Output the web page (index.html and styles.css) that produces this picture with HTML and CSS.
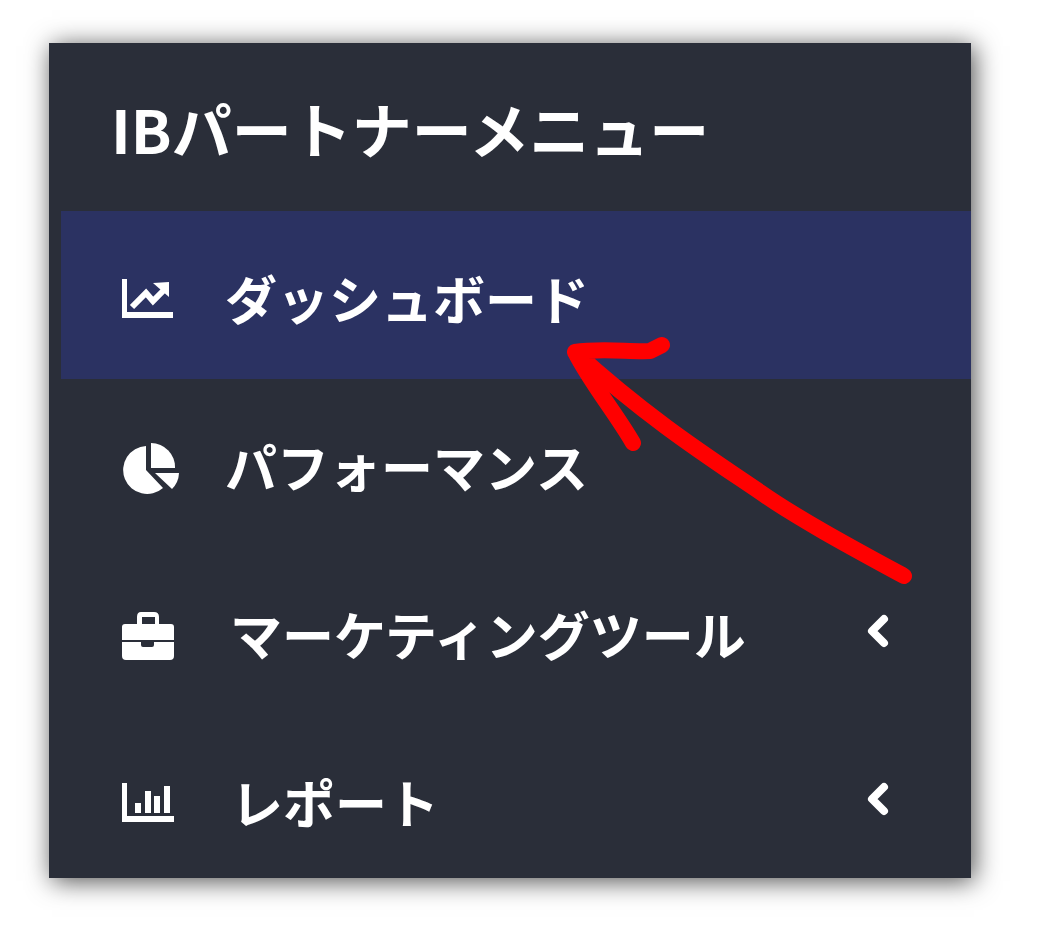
FILE: index.html
```html
<!DOCTYPE html>
<html lang="ja">
<head>
<meta charset="utf-8">
<title>IBパートナーメニュー</title>
<link rel="stylesheet" href="styles.css">
</head>
<body>
<div class="stage">
  <nav class="panel">
    <h1 class="title">IBパートナーメニュー</h1>
    <ul class="menu">
      <li class="item active">
        <svg class="icon" viewBox="0 0 60 52"><g transform="translate(0 4)"><path d="M1 0h5v33h46v6H1z"/><path class="line" d="M11 28l14-14 7 8 14-14"/><path d="M32 4l16-1v15z"/></g></svg>
        <span class="label">ダッシュボード</span>
      </li>
      <li class="item">
        <svg class="icon" viewBox="0 0 60 52"><path d="M25 3v24l17 18A24 24 0 1 1 25 3z"/><path d="M30 0a24 24 0 0 1 24 25H30z"/><path d="M34 30h24a24 24 0 0 1-7 16z"/></svg>
        <span class="label">パフォーマンス</span>
      </li>
      <li class="item">
        <svg class="icon" viewBox="0 0 60 52"><path fill-rule="evenodd" d="M20 1h13q5 0 5 5v7h12q3 0 3 3v13H1V16q0-3 3-3h12V6q0-5 4-5zm1 5v7h13V6z"/><path d="M1 31h19v3q0 2 2 2h9q2 0 2-2v-3h20v14q0 4-4 4H5q-4 0-4-4z"/></svg>
        <span class="label label-tool">マーケティングツール</span>
        <svg class="chevron" viewBox="0 0 24 34"><path d="M18 5L6 17l12 12"/></svg>
      </li>
      <li class="item">
        <svg class="icon" viewBox="0 0 60 52"><g transform="translate(0 4)"><path d="M1 0h5v33h47v6H1z"/><path d="M14 20h6v10h-6zM24 8h6v22h-6zM33 13h6v17h-6zM43 3h6v27h-6z"/></g></svg>
        <span class="label label-report">レポート</span>
        <svg class="chevron" viewBox="0 0 24 34"><path d="M18 5L6 17l12 12"/></svg>
      </li>
    </ul>
  </nav>
  <svg class="arrow" viewBox="0 0 1037 936"><path d="M904 576C860 552 800 520 760 492C710 458 650 420 575 352M575 352C600 348 630 352 650 351L662 345M575 352C590 382 615 412 633 443"/></svg>
</div>
</body>
</html>
```
FILE: styles.css
```css
html, body {
  margin: 0;
  padding: 0;
  background: #fff;
}
.stage {
  position: relative;
  width: 1037px;
  height: 936px;
  padding: 43px 0 0 49px;
  box-sizing: border-box;
  overflow: hidden;
}
.panel {
  width: 922px;
  height: 835px;
  overflow: hidden;
  background: #2a2e39;
  box-shadow: 3px 3px 24px rgba(0, 0, 0, .7);
  font-family: "Noto Sans CJK JP", "Noto Sans", sans-serif;
  color: #fff;
}
.title {
  height: 168px;
  margin: 0;
  padding: 2px 0 0 62px;
  box-sizing: border-box;
  display: flex;
  align-items: center;
  font-size: 60px;
  font-weight: 700;
  line-height: 1;
}
.menu {
  list-style: none;
  margin: 0;
  padding: 0 0 0 12px;
}
.item {
  height: 168px;
  display: flex;
  align-items: center;
  padding-left: 60px;
  box-sizing: border-box;
  position: relative;
}
.active {
  background: #2b3262;
}
.icon {
  width: 60px;
  height: 52px;
  margin-top: 12px;
  fill: #fff;
  flex: none;
}
.line {
  fill: none;
  stroke: #fff;
  stroke-width: 6;
}
.label {
  margin-left: 44px;
  padding-top: 6px;
  font-size: 52px;
  font-weight: 700;
  line-height: 1;
  white-space: nowrap;
}
.label-tool {
  margin-left: 49px;
}
.label-report {
  margin-left: 50px;
}
.chevron {
  position: absolute;
  left: 805px;
  top: 67px;
  width: 24px;
  height: 34px;
  fill: none;
  stroke: #fff;
  stroke-width: 8;
  stroke-linecap: round;
  stroke-linejoin: round;
}
.arrow {
  position: absolute;
  left: 0;
  top: 0;
  width: 1037px;
  height: 936px;
  fill: none;
  stroke: #f00;
  stroke-width: 16;
  stroke-linecap: round;
  stroke-linejoin: round;
}
```
